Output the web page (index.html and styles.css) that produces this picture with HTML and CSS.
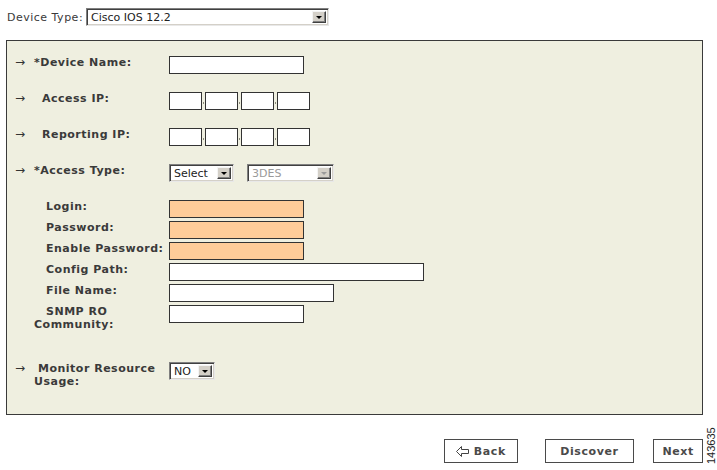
FILE: index.html
```html
<!DOCTYPE html>
<html>
<head>
<meta charset="utf-8">
<link rel="stylesheet" href="styles.css">
</head>
<body>
<div class="page">
  <div class="topbar">
    <span class="dt-label">Device Type:</span>
    <div class="sel sel-dt"><span class="sel-text">Cisco IOS 12.2</span><span class="sel-btn"><span class="tri"></span></span></div>
  </div>

  <div class="panel">
    <div class="row">
      <div class="lab"><span class="arr">→</span><span class="txt">*Device Name:</span></div>
      <div class="field"><div class="inp w135"></div></div>
    </div>
    <div class="row gap-big">
      <div class="lab"><span class="arr">→</span><span class="txt ind8">Access IP:</span></div>
      <div class="field ip"><div class="inp ipbox"></div><span class="dot"></span><div class="inp ipbox"></div><span class="dot"></span><div class="inp ipbox"></div><span class="dot"></span><div class="inp ipbox"></div></div>
    </div>
    <div class="row gap-big">
      <div class="lab"><span class="arr">→</span><span class="txt ind8">Reporting IP:</span></div>
      <div class="field ip"><div class="inp ipbox"></div><span class="dot"></span><div class="inp ipbox"></div><span class="dot"></span><div class="inp ipbox"></div><span class="dot"></span><div class="inp ipbox"></div></div>
    </div>
    <div class="row gap-big">
      <div class="lab"><span class="arr">→</span><span class="txt">*Access Type:</span></div>
      <div class="field selrow">
        <div class="sel sel-type"><span class="sel-text">Select</span><span class="sel-btn"><span class="tri"></span></span></div>
        <div class="sel sel-enc disabled"><span class="sel-text">3DES</span><span class="sel-btn"><span class="tri"></span></span></div>
      </div>
    </div>
    <div class="row gap-big">
      <div class="lab"><span class="arr"></span><span class="txt ind12">Login:</span></div>
      <div class="field"><div class="inp w135 req"></div></div>
    </div>
    <div class="row gap-small">
      <div class="lab"><span class="arr"></span><span class="txt ind12">Password:</span></div>
      <div class="field"><div class="inp w135 req"></div></div>
    </div>
    <div class="row gap-small">
      <div class="lab"><span class="arr"></span><span class="txt ind12">Enable Password:</span></div>
      <div class="field"><div class="inp w135 req"></div></div>
    </div>
    <div class="row gap-small">
      <div class="lab"><span class="arr"></span><span class="txt ind12">Config Path:</span></div>
      <div class="field"><div class="inp w255"></div></div>
    </div>
    <div class="row gap-small">
      <div class="lab"><span class="arr"></span><span class="txt ind12">File Name:</span></div>
      <div class="field"><div class="inp w165"></div></div>
    </div>
    <div class="row gap-small">
      <div class="lab"><span class="arr"></span><span class="txt"><span class="line ind12">SNMP RO</span><span class="line">Community:</span></span></div>
      <div class="field"><div class="inp w135"></div></div>
    </div>
    <div class="row gap-monitor">
      <div class="lab"><span class="arr">→</span><span class="txt"><span class="line ind4">Monitor Resource</span><span class="line">Usage:</span></span></div>
      <div class="field"><div class="sel sel-no"><span class="sel-text">NO</span><span class="sel-btn"><span class="tri"></span></span></div></div>
    </div>
  </div>

  <div class="buttons">
    <div class="btn btn-back"><svg class="back-ico" width="13" height="11" viewBox="0 0 13 11"><polygon points="0.5,5.5 5.5,0.5 5.5,3.5 12.5,3.5 12.5,7.5 5.5,7.5 5.5,10.5" fill="none" stroke="#444" stroke-width="1"/></svg><span>Back</span></div>
    <div class="btn btn-discover">Discover</div>
    <div class="btn btn-next">Next</div>
    <span class="fig">143635</span>
  </div>
</div>
</body>
</html>
```

FILE: styles.css
```css
html, body {
  margin: 0;
  padding: 0;
  background: #ffffff;
}

.page {
  width: 717px;
  height: 470px;
  font-family: "DejaVu Sans", Verdana, sans-serif;
  font-size: 11px;
  color: #333;
  overflow: hidden;
}

.topbar {
  display: flex;
  align-items: center;
  margin: 8px 0 0 6px;
  height: 18px;
}

.dt-label {
  font-size: 11px;
  color: #3a3a3a;
  margin-right: 3px;
  margin-left: 1px;
  letter-spacing: 0.5px;
}

/* Windows classic select */
.sel {
  display: flex;
  align-items: center;
  box-sizing: border-box;
  height: 18px;
  background: #fff;
  border-top: 1px solid #808080;
  border-left: 1px solid #808080;
  border-right: 1px solid #e8e8e8;
  border-bottom: 1px solid #e8e8e8;
  box-shadow: inset 1px 1px 0 #404040, inset -1px -1px 0 #d4d0c8;
  padding: 2px 2px 2px 4px;
  font-family: "DejaVu Sans", Tahoma, sans-serif;
  font-size: 11px;
  color: #222;
}

.sel-text {
  flex: 1;
  line-height: 13px;
  white-space: nowrap;
}

.sel-btn {
  box-sizing: border-box;
  width: 14px;
  height: 12px;
  background: #d4d0c8;
  border-top: 1px solid #f4f4f4;
  border-left: 1px solid #f4f4f4;
  border-right: 1px solid #404040;
  border-bottom: 1px solid #404040;
  box-shadow: inset -1px -1px 0 #808080;
  display: flex;
  align-items: center;
  justify-content: center;
}

.tri {
  width: 0;
  height: 0;
  border-left: 3px solid transparent;
  border-right: 3px solid transparent;
  border-top: 3px solid #000;
  margin: 1px 1px 0 0;
}

.sel.disabled .sel-text { color: #9a9a9a; }
.sel.disabled .tri { border-top-color: #9a9a9a; }

.sel-dt { width: 243px; }
.sel-type { width: 65px; }
.sel-enc { width: 87px; margin-left: 13px; }
.sel-no { width: 46px; }

/* Panel */
.panel {
  margin: 14px 0 0 6px;
  width: 697px;
  box-sizing: border-box;
  border: 1px solid #3a3a3a;
  background: #efefe0;
  padding: 15px 0 26px 0;
}

.row {
  display: flex;
  align-items: flex-start;
}

.gap-big { margin-top: 18px; }
.gap-small { margin-top: 3px; }
.gap-monitor { margin-top: 31px; }

.lab {
  width: 162px;
  box-sizing: border-box;
  padding-left: 8px;
  display: flex;
  align-items: flex-start;
  line-height: 13px;
}

.arr {
  width: 19px;
  flex: none;
  font-weight: normal;
  color: #333;
  font-size: 12px;
  line-height: 13px;
}

.txt {
  font-weight: bold;
  color: #3a3a3a;
  white-space: nowrap;
  letter-spacing: 0.5px;
}

.line { display: block; }

.ind4 { padding-left: 4px; }
.ind8 { padding-left: 8px; }
.ind12 { padding-left: 12px; }

.field {
  display: flex;
  align-items: center;
}

.inp {
  box-sizing: border-box;
  height: 18px;
  background: #fff;
  border: 1px solid #333;
}

.inp.req { background: #ffcc99; }

.w135 { width: 135px; }
.w165 { width: 165px; }
.w255 { width: 255px; }

.ipbox { width: 33px; }

.dot {
  width: 3px;
  height: 18px;
  position: relative;
}
.dot::after {
  content: "";
  position: absolute;
  left: 1px;
  top: 10px;
  width: 1px;
  height: 2px;
  background: #8a8a7a;
}

/* Buttons */
.buttons {
  display: flex;
  align-items: flex-end;
  margin-top: 12px;
  padding-left: 444px;
  height: 38px;
  box-sizing: border-box;
}

.btn {
  box-sizing: border-box;
  height: 24px;
  margin-bottom: 2px;
  border: 1px solid #4a4a4a;
  background: #fff;
  color: #4a4a4a;
  font-weight: bold;
  font-size: 11px;
  display: flex;
  align-items: center;
  justify-content: center;
  letter-spacing: 0.6px;
}

.btn-back { width: 74px; gap: 5px; }
.btn-discover { width: 90px; margin-left: 27px; }
.btn-next { width: 50px; margin-left: 19px; }

.back-ico { display: block; }

.fig {
  writing-mode: vertical-rl;
  transform: rotate(180deg);
  font-family: "Liberation Sans", Arial, sans-serif;
  font-size: 11px;
  color: #222;
  margin-left: 3px;
  line-height: 11px;
  height: 38px;
  text-align: center;
}
```
